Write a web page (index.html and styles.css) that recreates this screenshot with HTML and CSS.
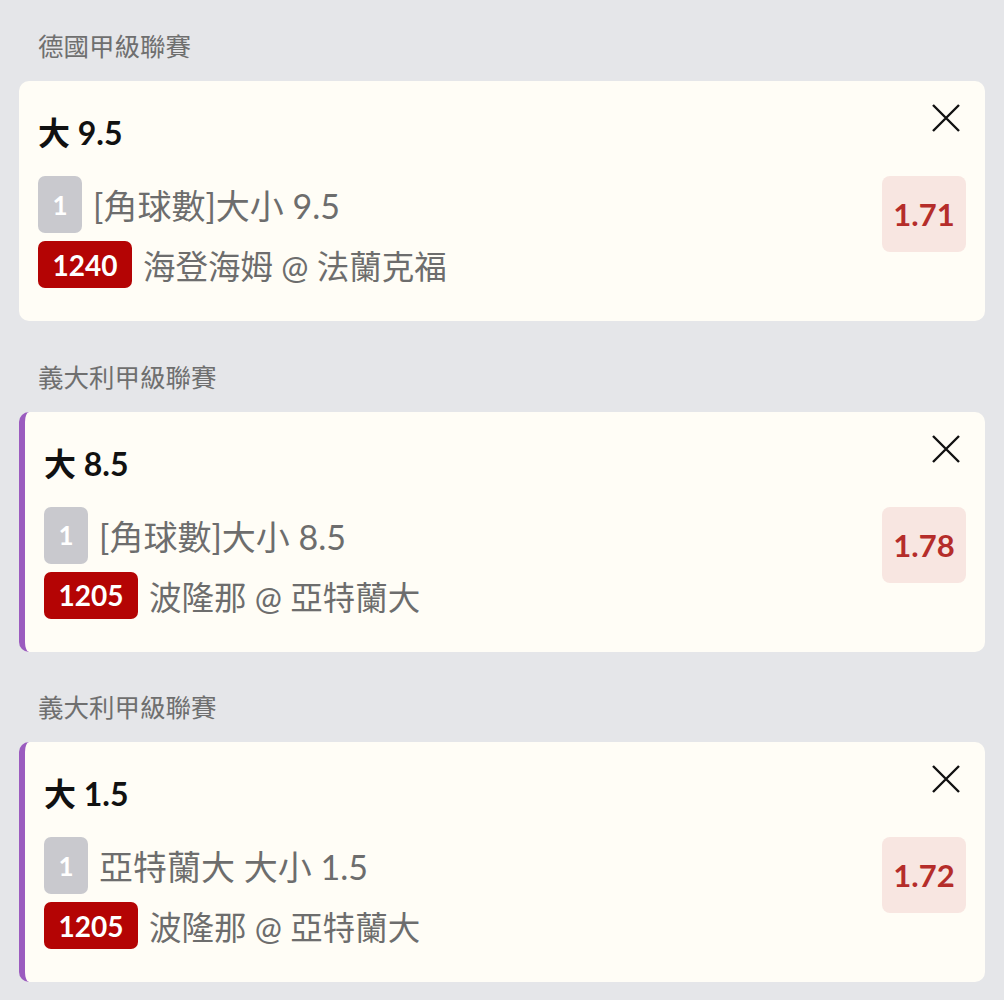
FILE: index.html
```html
<!DOCTYPE html>
<html lang="zh-Hant">
<head>
	<meta charset="UTF-8">
	<title>投注單</title>
	<link rel="stylesheet" href="styles.css">
</head>
<body>
	<div class="slip">

		<div class="league">德國甲級聯賽</div>
		<div class="bet">
			<div class="bet-head">
				<div class="bet-title">大 9.5</div>
				<svg class="close" viewBox="0 0 28 28"><path d="M1 1 L27 27 M27 1 L1 27"/></svg>
			</div>
			<div class="bet-body">
				<div class="info">
					<div class="line">
						<span class="tag-num">1</span>
						<span class="txt market">[角球數]大小 9.5</span>
					</div>
					<div class="line">
						<span class="tag-match">1240</span>
						<span class="txt">海登海姆 @ 法蘭克福</span>
					</div>
				</div>
				<div class="odds">1.71</div>
			</div>
		</div>

		<div class="league">義大利甲級聯賽</div>
		<div class="bet marked">
			<div class="bet-head">
				<div class="bet-title">大 8.5</div>
				<svg class="close" viewBox="0 0 28 28"><path d="M1 1 L27 27 M27 1 L1 27"/></svg>
			</div>
			<div class="bet-body">
				<div class="info">
					<div class="line">
						<span class="tag-num">1</span>
						<span class="txt market">[角球數]大小 8.5</span>
					</div>
					<div class="line">
						<span class="tag-match">1205</span>
						<span class="txt">波隆那 @ 亞特蘭大</span>
					</div>
				</div>
				<div class="odds">1.78</div>
			</div>
		</div>

		<div class="league">義大利甲級聯賽</div>
		<div class="bet marked">
			<div class="bet-head">
				<div class="bet-title">大 1.5</div>
				<svg class="close" viewBox="0 0 28 28"><path d="M1 1 L27 27 M27 1 L1 27"/></svg>
			</div>
			<div class="bet-body">
				<div class="info">
					<div class="line">
						<span class="tag-num">1</span>
						<span class="txt market">亞特蘭大 大小 1.5</span>
					</div>
					<div class="line">
						<span class="tag-match">1205</span>
						<span class="txt">波隆那 @ 亞特蘭大</span>
					</div>
				</div>
				<div class="odds">1.72</div>
			</div>
		</div>

	</div>
</body>
</html>
```

FILE: styles.css
```css
body{
	margin: 0;
	background: #e5e6e9;
	font-family: Lato, "Noto Sans CJK TC", sans-serif;
}

.slip{
	padding: 28px 19px 20px;
}

.league{
	font-family: "Noto Sans CJK TC", sans-serif;
	font-size: 25.5px;
	line-height: 34px;
	color: #6f6f6f;
	padding-left: 19px;
	margin-bottom: 19px;
}

.bet{
	background: #fffdf6;
	border-radius: 10px;
	height: 240px;
	box-sizing: border-box;
	padding: 22px 19px 0 19px;
	margin-bottom: 37.5px;
}

.bet.marked{
	border-left: 6px solid #9b5cbf;
}

.bet-head{
	display: flex;
	justify-content: space-between;
	align-items: flex-start;
}

.bet-title{
	margin-top: 10px;
	font-size: 32px;
	line-height: 40px;
	font-weight: bold;
	color: #111;
}

.close{
	width: 28px;
	height: 28px;
	margin: 1px 6px 0 0;
	fill: none;
	stroke: #111;
	stroke-width: 2.4;
}

.bet-body{
	display: flex;
	justify-content: space-between;
	align-items: flex-start;
	margin-top: 23px;
}

.info{
	display: flex;
	flex-direction: column;
	gap: 8px;
}

.line{
	display: flex;
	align-items: center;
	gap: 11px;
}

.tag-num{
	width: 44px;
	height: 57px;
	border-radius: 7px;
	background: #c9c9ce;
	color: #fff;
	font-size: 26px;
	font-weight: bold;
	display: flex;
	align-items: center;
	justify-content: center;
}

.tag-match{
	width: 94px;
	height: 47px;
	border-radius: 7px;
	background: #b40404;
	color: #fff;
	font-size: 28px;
	font-weight: bold;
	display: flex;
	align-items: center;
	justify-content: center;
}

.txt{
	font-size: 32.5px;
	color: #6d6d6d;
}

.txt.market{
	font-size: 34px;
}

.odds{
	width: 84px;
	height: 76px;
	border-radius: 8px;
	background: #f8e6e1;
	color: #b52d2a;
	font-size: 31px;
	font-weight: bold;
	display: flex;
	align-items: center;
	justify-content: center;
}
```
